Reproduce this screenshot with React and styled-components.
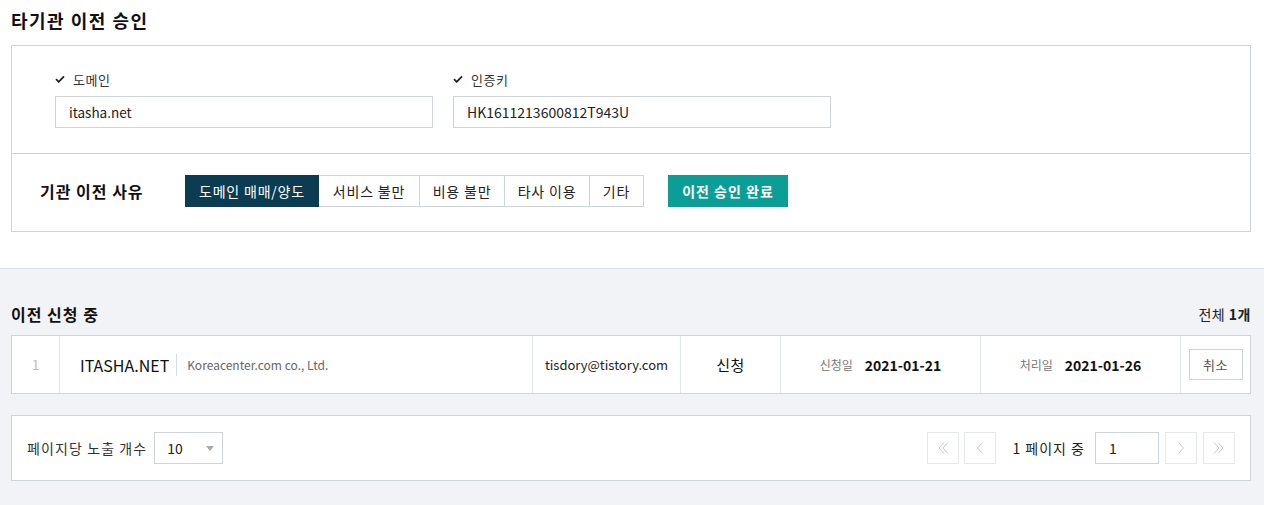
import React from 'react';
import styled, { createGlobalStyle } from 'styled-components';

const GlobalStyle = createGlobalStyle`
  body {
    margin: 0;
    background: #f1f3f6;
    font-family: "Noto Sans CJK KR", "Noto Sans", sans-serif;
    color: #222;
    font-size: 14px;
  }
`;

const TopSection = styled.section`
  background: #fff;
  padding: 0 13px 36px 11px;
  border-bottom: 1px solid #d5dbe0;
`;

const Title = styled.h1`
  margin: 0 0 5px;
  font-size: 18px;
  font-weight: 700;
  letter-spacing: 1.5px;
  line-height: 40px;
  height: 40px;
  color: #111;
`;

const Box = styled.div`
  border: 1px solid #cdd5db;
  background: #fff;
`;

const FieldRow = styled.div`
  display: flex;
  gap: 20px;
  padding: 23px 43px 25px;
  border-bottom: 1px solid #cdd5db;
`;

const Field = styled.div`
  display: flex;
  flex-direction: column;
  width: 378px;
`;

const Label = styled.div`
  display: flex;
  align-items: center;
  gap: 8px;
  height: 20px;
  margin-bottom: 7px;
  font-size: 13px;
  letter-spacing: 0.5px;
  color: #333;
`;

const Input = styled.div`
  box-sizing: border-box;
  height: 32px;
  border: 1px solid #cdd5db;
  padding: 0 13px;
  line-height: 30px;
  font-size: ${(p) => p.$size || 14}px;
  color: #222;
`;

const ReasonRow = styled.div`
  display: flex;
  align-items: center;
  padding: 21px 28px 24px;
`;

const ReasonLabel = styled.div`
  width: 145px;
  font-size: 16px;
  font-weight: 700;
  letter-spacing: 1px;
  color: #111;
`;

const Segments = styled.div`
  display: flex;
`;

const Segment = styled.button`
  box-sizing: border-box;
  height: 32px;
  width: ${(p) => p.$w}px;
  padding: 0;
  margin-left: -1px;
  border: 1px solid ${(p) => (p.$active ? '#0b3c52' : '#cdd5db')};
  background: ${(p) => (p.$active ? '#0b3c52' : '#fff')};
  color: ${(p) => (p.$active ? '#fff' : '#222')};
  font-family: inherit;
  font-size: 14px;
  letter-spacing: 0.8px;
  position: relative;
  z-index: ${(p) => (p.$active ? 1 : 0)};
  &:first-child { margin-left: 0; }
`;

const ApproveButton = styled.button`
  height: 32px;
  width: 120px;
  margin-left: 24px;
  border: 0;
  background: #0a9e96;
  color: #fff;
  font-family: inherit;
  font-size: 14px;
  font-weight: 700;
  letter-spacing: 1px;
`;

const ListSection = styled.section`
  padding: 35px 13px 24px 11px;
`;

const ListHead = styled.div`
  display: flex;
  justify-content: space-between;
  align-items: center;
  height: 20px;
  margin-bottom: 11px;
`;

const ListTitle = styled.h2`
  margin: 0;
  font-size: 16px;
  font-weight: 700;
  letter-spacing: 1px;
  color: #111;
`;

const Total = styled.div`
  font-size: 14px;
  letter-spacing: 0.5px;
  color: #222;
  b { font-weight: 700; }
`;

const Row = styled.div`
  display: flex;
  height: 57px;
  border: 1px solid #cdd5db;
  background: #fff;
`;

const Cell = styled.div`
  display: flex;
  align-items: center;
  justify-content: ${(p) => p.$justify || 'center'};
  width: ${(p) => p.$w}px;
  flex: ${(p) => (p.$grow ? 1 : 'none')};
  padding: ${(p) => p.$pad || '0'};
  border-right: ${(p) => (p.$last ? '0' : '1px solid #e1e7eb')};
  box-sizing: border-box;
`;

const Index = styled.span`
  color: #bbb;
  font-size: 13px;
`;

const DomainName = styled.span`
  font-size: 16px;
  color: #111;
`;

const Divider = styled.span`
  width: 1px;
  height: 22px;
  background: #d5dbe0;
  margin: 0 10px 0 7px;
`;

const Registrar = styled.span`
  font-size: 12px;
  color: #666;
`;

const Email = styled.span`
  font-size: 13px;
  color: #222;
`;

const Status = styled.span`
  font-size: 15px;
  letter-spacing: 0.5px;
  color: #111;
`;

const DateLabel = styled.span`
  font-size: 12px;
  color: #777;
  margin-right: 12px;
`;

const DateValue = styled.span`
  font-size: 14px;
  font-weight: 700;
  color: #111;
`;

const CancelButton = styled.button`
  width: 54px;
  height: 31px;
  border: 1px solid #cdd5db;
  background: #fff;
  color: #555;
  font-family: inherit;
  font-size: 13px;
  letter-spacing: 0.5px;
`;

const Pager = styled.div`
  display: flex;
  justify-content: space-between;
  align-items: center;
  margin-top: 21px;
  padding: 16px 15px;
  border: 1px solid #cdd5db;
  background: #fff;
`;

const PerPage = styled.div`
  display: flex;
  align-items: center;
  gap: 7px;
  font-size: 14px;
  letter-spacing: 1.1px;
  color: #333;
`;

const Select = styled.div`
  box-sizing: border-box;
  width: 69px;
  height: 32px;
  border: 1px solid #cdd5db;
  display: flex;
  align-items: center;
  justify-content: space-between;
  padding: 0 8px 0 12px;
  font-size: 14px;
  letter-spacing: 0;
  color: #222;
`;

const Caret = styled.span`
  width: 0;
  height: 0;
  border-left: 4px solid transparent;
  border-right: 4px solid transparent;
  border-top: 5px solid #aaa;
`;

const Nav = styled.div`
  display: flex;
  align-items: center;
`;

const NavGroup = styled.div`
  display: flex;
  gap: ${(p) => p.$gap}px;
  margin-left: ${(p) => p.$ml || 0}px;
`;

const PageButton = styled.button`
  width: 32px;
  height: 32px;
  padding: 0;
  border: 1px solid #e6e9ec;
  background: #fff;
  display: flex;
  align-items: center;
  justify-content: center;
`;

const PageText = styled.span`
  font-size: 14px;
  letter-spacing: 1px;
  color: #222;
  margin: 0 10px 0 16px;
`;

const PageInput = styled.div`
  box-sizing: border-box;
  width: 64px;
  height: 32px;
  border: 1px solid #cdd5db;
  padding: 0 13px;
  line-height: 30px;
  font-size: 14px;
  color: #222;
`;

const Check = () => (
  <svg width="10" height="8" viewBox="0 0 10 8">
    <path d="M1 4.2 L3.7 6.8 L9 1.3" fill="none" stroke="#222" strokeWidth="1.8" />
  </svg>
);

const Chevron = ({ dir, double }) => {
  const flip = dir === 'left' ? 'scale(-1,1) translate(-14,0)' : '';
  return (
    <svg width="14" height="14" viewBox="0 0 14 14">
      <g transform={flip} fill="none" stroke="#c9c9c9" strokeWidth="1">
        {double ? (
          <>
            <polyline points="2,1.5 7,7 2,12.5" />
            <polyline points="6,1.5 11,7 6,12.5" />
          </>
        ) : (
          <polyline points="4.5,1.5 9.5,7 4.5,12.5" />
        )}
      </g>
    </svg>
  );
};

const reasons = [
  { label: '도메인 매매/양도', w: 134, active: true },
  { label: '서비스 불만', w: 102 },
  { label: '비용 불만', w: 86 },
  { label: '타사 이용', w: 86 },
  { label: '기타', w: 55 },
];

const App = () => (
  <>
    <GlobalStyle />
    <TopSection>
      <Title>타기관 이전 승인</Title>
      <Box>
        <FieldRow>
          <Field>
            <Label><Check />도메인</Label>
            <Input $size={13.5}>itasha.net</Input>
          </Field>
          <Field>
            <Label><Check />인증키</Label>
            <Input>HK1611213600812T943U</Input>
          </Field>
        </FieldRow>
        <ReasonRow>
          <ReasonLabel>기관 이전 사유</ReasonLabel>
          <Segments>
            {reasons.map((r) => (
              <Segment key={r.label} $active={r.active} $w={r.w}>{r.label}</Segment>
            ))}
          </Segments>
          <ApproveButton>이전 승인 완료</ApproveButton>
        </ReasonRow>
      </Box>
    </TopSection>

    <ListSection>
      <ListHead>
        <ListTitle>이전 신청 중</ListTitle>
        <Total>전체 <b>1개</b></Total>
      </ListHead>
      <Row>
        <Cell $w={48}><Index>1</Index></Cell>
        <Cell $w={473} $justify="flex-start" $pad="0 0 0 20px">
          <DomainName>ITASHA.NET</DomainName>
          <Divider />
          <Registrar>Koreacenter.com co., Ltd.</Registrar>
        </Cell>
        <Cell $w={148}><Email>tisdory@tistory.com</Email></Cell>
        <Cell $w={100}><Status>신청</Status></Cell>
        <Cell $w={200}><DateLabel>신청일</DateLabel><DateValue>2021-01-21</DateValue></Cell>
        <Cell $w={200}><DateLabel>처리일</DateLabel><DateValue>2021-01-26</DateValue></Cell>
        <Cell $grow $last><CancelButton>취소</CancelButton></Cell>
      </Row>

      <Pager>
        <PerPage>
          페이지당 노출 개수
          <Select>10<Caret /></Select>
        </PerPage>
        <Nav>
          <NavGroup $gap={5}>
            <PageButton><Chevron dir="left" double /></PageButton>
            <PageButton><Chevron dir="left" /></PageButton>
          </NavGroup>
          <PageText>1 페이지 중</PageText>
          <PageInput>1</PageInput>
          <NavGroup $gap={6} $ml={6}>
            <PageButton><Chevron dir="right" /></PageButton>
            <PageButton><Chevron dir="right" double /></PageButton>
          </NavGroup>
        </Nav>
      </Pager>
    </ListSection>
  </>
);

export default App;
